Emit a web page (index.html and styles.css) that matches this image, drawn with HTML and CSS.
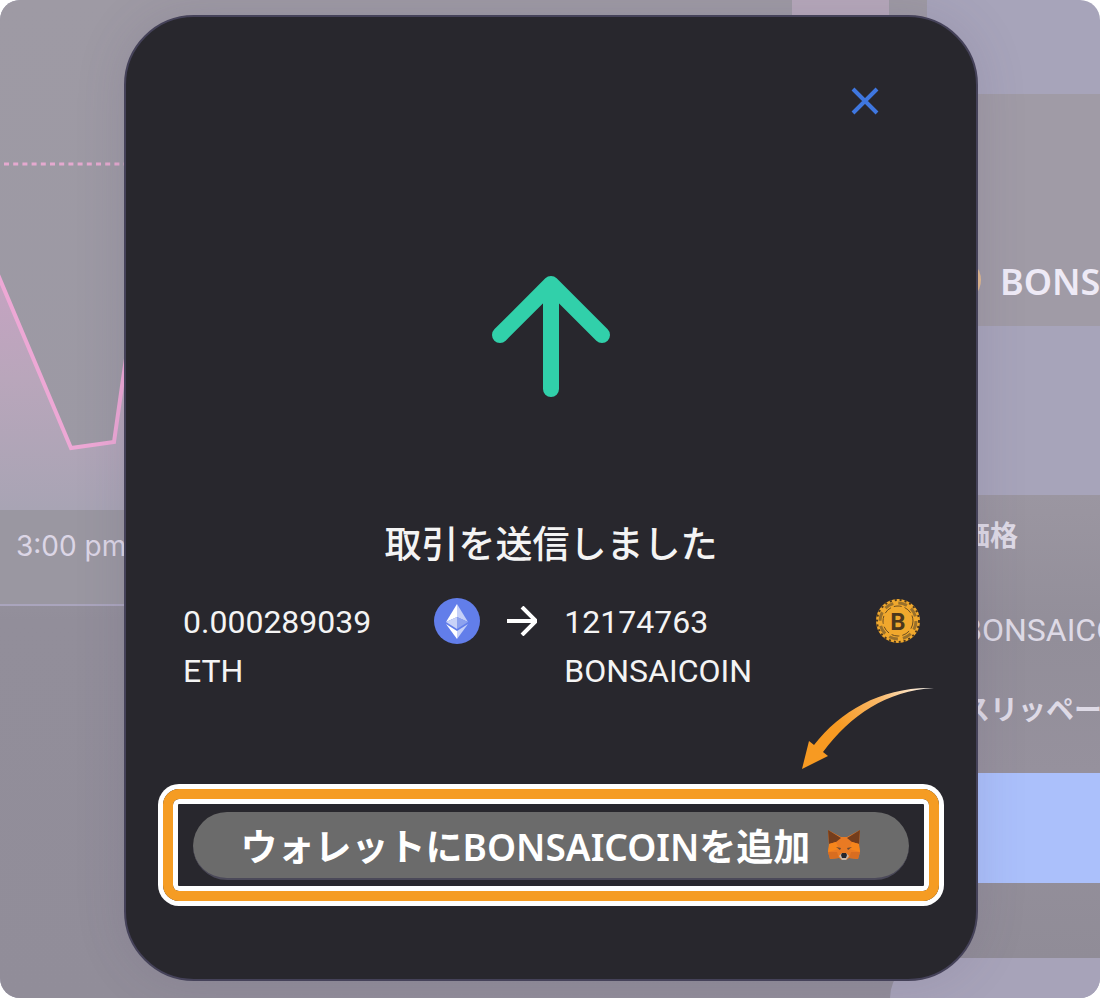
FILE: index.html
```
<!DOCTYPE html>
<html lang="ja">
<head>
  <meta charset="UTF-8">
  <meta name="viewport" content="width=device-width, initial-scale=1.0">
  <title>取引を送信しました</title>
  <link rel="stylesheet" href="styles.css">
</head>
<body>
  <div class="screen">
    <main class="chart-panel">
      <svg class="chart" viewBox="0 0 927 510" preserveAspectRatio="xMinYMin slice" aria-hidden="true">
        <defs>
          <linearGradient id="area" x1="0" y1="270" x2="0" y2="510" gradientUnits="userSpaceOnUse">
            <stop offset="0" stop-color="#c6a3c2"/>
            <stop offset="0.45" stop-color="#b9a6bb"/>
            <stop offset="1" stop-color="#a8a4b4"/>
          </linearGradient>
        </defs>
        <rect x="792" y="0" width="97" height="510" fill="#b6a8ba"/>
        <path d="M0 276L71 448L114 442L124 372L170 60V510H0Z" fill="url(#area)"/>
        <path d="M-4 270L71 448L114 442L124 372L170 60" fill="none" stroke="#eda8d5" stroke-width="4"/>
        <path d="M4 164H200" stroke="#e5a9cf" stroke-width="3" stroke-dasharray="5 4.2"/>
      </svg>
      <div class="time-axis">3:00 pm</div>
    </main>

    <aside class="swap">
      <div class="swap-token">
        <svg class="coin" viewBox="0 0 46 46" aria-hidden="true"><circle cx="23" cy="20" r="23" fill="#e2bb90"/></svg>
        <span>BONSAICOIN</span>
      </div>
      <div class="swap-details">
        <p class="label">価格</p>
        <p class="rate">BONSAICOIN</p>
        <p class="label">スリッページ</p>
        <button class="swap-button" type="button" aria-label="スワップ"></button>
      </div>
      <div class="swap-foot"></div>
    </aside>

    <div class="overlay">
      <section class="modal" role="dialog" aria-labelledby="modal-title">
        <button class="close" type="button" aria-label="閉じる">
          <svg viewBox="0 0 28 28"><path d="M2 2L26 26M26 2L2 26" fill="none" stroke="#3f77e0" stroke-width="4"/></svg>
        </button>

        <svg class="sent-icon" viewBox="0 0 118 122" aria-hidden="true">
          <path d="M8 59L59 8L110 59M59 10V113" fill="none" stroke="#31d0aa" stroke-width="16" stroke-linecap="round" stroke-linejoin="round"/>
        </svg>

        <h1 id="modal-title">取引を送信しました</h1>

        <div class="trade">
          <div class="token">
            <span>0.000289039 ETH</span>
            <svg class="coin" viewBox="0 0 46 46" aria-hidden="true">
              <circle cx="23" cy="23" r="23" fill="#627eea"/>
              <path d="M23 6L12 24L23 19Z" fill="#fff"/>
              <path d="M23 6L34 24L23 19Z" fill="#c5d0f8"/>
              <path d="M12 24L23 19V31Z" fill="#c9d3f8"/>
              <path d="M34 24L23 19V31Z" fill="#8da2ef"/>
              <path d="M12 26L23 33V41Z" fill="#fff"/>
              <path d="M34 26L23 33V41Z" fill="#c5d0f8"/>
            </svg>
          </div>
          <svg class="to-arrow" viewBox="0 0 30 30" aria-hidden="true">
            <path d="M0 15H28M15 1L29 15L15 29" fill="none" stroke="#fff" stroke-width="4"/>
          </svg>
          <div class="token">
            <span>12174763 BONSAICOIN</span>
            <svg class="coin" viewBox="0 0 46 46" aria-hidden="true">
              <circle cx="23" cy="23" r="22" fill="#f0a82d"/>
              <circle cx="23" cy="23" r="21" fill="none" stroke="#4b371d" stroke-width="2" stroke-dasharray="2 3"/>
              <circle cx="23" cy="23" r="18" fill="none" stroke="#99702b" stroke-width="3" stroke-dasharray="9 5.1"/>
              <circle cx="23" cy="23" r="15" fill="none" stroke="#6b4d20" stroke-width="1" stroke-dasharray="8 3"/>
              <text x="23" y="32" text-anchor="middle" class="coin-letter">B</text>
            </svg>
          </div>
        </div>

        <div class="highlight">
          <svg class="pointer" viewBox="0 0 134 84" aria-hidden="true">
            <defs>
              <linearGradient id="tail" x1="0" y1="84" x2="134" y2="0" gradientUnits="userSpaceOnUse">
                <stop offset="0.35" stop-color="#f79a22"/>
                <stop offset="0.65" stop-color="#f9b868"/>
                <stop offset="1" stop-color="#fff"/>
              </linearGradient>
            </defs>
            <path d="M1 83L8 55L13 59C40 24 83 0 133 2C85 5 50 29 22 66L27 70Z" fill="url(#tail)"/>
          </svg>
          <button class="add-wallet" type="button">
            <span>ウォレットにBONSAICOINを追加</span>
            <svg class="fox" viewBox="0 0 34 32" aria-hidden="true">
              <path d="M1 1L14 8H20L33 1L32 17L33 23L31 30L22 29L19 31H15L12 29L3 30L1 23L2 17Z" fill="#e97a23"/>
              <path d="M1 1L14 9L9 13L2 15ZM33 1L20 9L25 13L32 15Z" fill="#743d1c"/>
              <path d="M2 15L9 13L12 20L1 23ZM32 15L25 13L22 20L33 23Z" fill="#f6851b"/>
              <path d="M1 23H10L12 29L3 30ZM33 23H24L22 29L31 30Z" fill="#d86d20"/>
              <path d="M9 18L14 19L13 21ZM25 18L20 19L21 21Z" fill="#6b4a35"/>
              <path d="M12 27L15 24H19L22 27L19 31H15Z" fill="#c7b8ab"/>
              <path d="M14 26L15 24H19L20 26L19 29H15Z" fill="#25262c"/>
            </svg>
          </button>
        </div>
      </section>
    </div>
  </div>
</body>
</html>
```
FILE: styles.css
```
* { box-sizing: border-box; }
body { margin: 0; background: #fff; color: #f4f4f4; font-family: "Noto Sans", "Noto Sans CJK JP", sans-serif; }
h1, p { margin: 0; }
button { border: none; padding: 0; font-family: inherit; cursor: pointer; }
svg { display: block; }

.screen {
  position: relative;
  display: grid;
  grid-template-columns: minmax(0, 1fr) 173px;
  min-height: 998px;
  overflow: hidden;
  border-radius: 20px;
  background: #a7a4ba;
}

/* page behind the dialog */
.chart-panel { background: linear-gradient(#9e9aa4, #9c99a4 510px, #928e9a 620px, #918d99); }
.chart { width: 100%; height: 510px; }
.time-axis {
  height: 96px;
  padding: 12px 16px;
  border-bottom: 2px solid #aaa5bd;
  background: #9a97a1;
  color: #dcd6e6;
  font-family: Inter, sans-serif;
  font-size: 28px;
  line-height: 48px;
}
.swap { display: flex; flex-direction: column; min-width: 0; white-space: nowrap; }
.swap-token {
  display: flex;
  align-items: flex-end;
  gap: 19px;
  height: 232px;
  margin-top: 94px;
  padding: 0 8px 20px;
  background: #a09ba6;
  color: #eeeaf6;
  font-size: 36px;
  font-weight: 600;
  line-height: 48px;
}
.swap-details {
  display: flex;
  flex-direction: column;
  height: 463px;
  margin-top: 169px;
  padding-top: 16px;
  background: linear-gradient(#9b96a1, #928e99 30%, #96919d 60%, #908c97);
  color: #dedae6;
}
.swap-details p { padding-left: 35px; line-height: 48px; }
.label { font-size: 28px; font-weight: 600; }
.rate { margin: 47px 0 31px; font-family: Roboto, sans-serif; font-size: 32px; }
.swap-button { height: 110px; margin-top: 40px; background: #abc0fb; }
.swap-foot { flex: 1; margin-left: -37px; border-top-left-radius: 40px; background: #a7a3b9; }

/* dialog */
.overlay { position: absolute; inset: 0; display: flex; padding: 15px 122px 17px 124px; }
.modal {
  flex: 1;
  display: flex;
  flex-direction: column;
  align-items: center;
  padding: 70px 55px 78px;
  border: 2px solid #454259;
  border-radius: 70px;
  background: #28272d;
  box-shadow: 0 0 50px rgba(80, 70, 110, 0.15);
}
.close { align-self: flex-end; width: 28px; height: 28px; margin-right: 42px; background: none; }
.sent-icon { width: 118px; height: 122px; margin-top: 161px; }
h1 { margin-top: 122px; font-size: 37px; font-weight: 500; line-height: 48px; }
.trade {
  display: grid;
  grid-template-columns: 5fr 30px 6fr;
  gap: 27px;
  width: 100%;
  margin-top: 30px;
  padding-left: 2px;
  font-family: Roboto, sans-serif;
  font-size: 32px;
  line-height: 49px;
}
.token { display: flex; justify-content: space-between; align-items: flex-start; }
.token span { width: min-content; }
.coin { flex: none; width: 46px; height: 46px; }
.coin-letter { fill: #4b371d; font-size: 24px; font-weight: 700; }
.to-arrow { width: 30px; height: 30px; margin-top: 8px; }

/* callout around the wallet button */
.highlight {
  position: relative;
  align-self: stretch;
  margin: auto -18px 0;
  padding: 13px 20px 11px;
  border: 10px solid #f59c23;
  border-radius: 16px;
  box-shadow: 0 0 0 5px #fff, inset 0 0 0 5px #fff;
}
.pointer { position: absolute; top: -113px; right: -6px; width: 134px; height: 84px; }
.add-wallet {
  display: flex;
  justify-content: center;
  align-items: center;
  gap: 17px;
  width: 100%;
  height: 68px;
  border-bottom: 2px solid #4b4959;
  border-radius: 34px;
  background: #6b6b6b;
  color: #fff;
  font-size: 37px;
  font-weight: 600;
}
.fox { width: 34px; height: 32px; }
```
